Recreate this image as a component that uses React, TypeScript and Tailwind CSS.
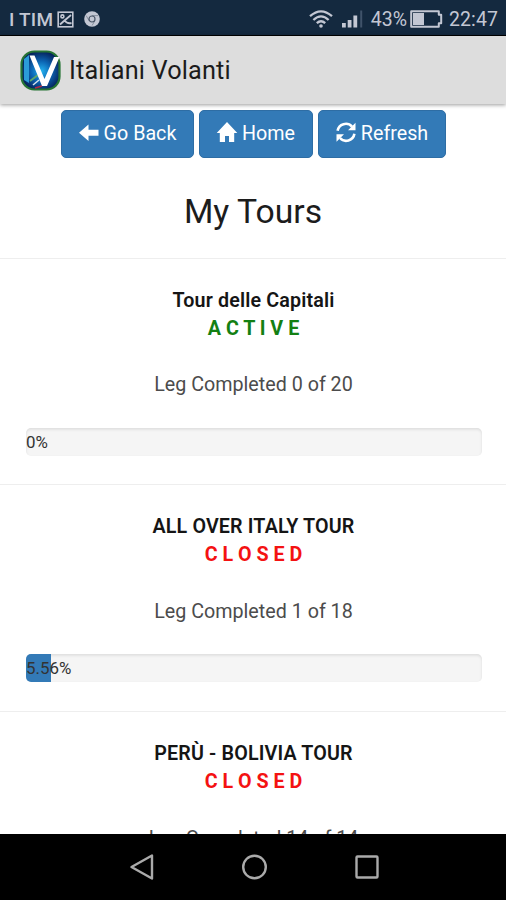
interface Tour {
  name: string
  status: 'ACTIVE' | 'CLOSED'
  completed: number
  legs: number
  progress: number
}

const TOURS: Tour[] = [
  { name: 'Tour delle Capitali', status: 'ACTIVE', completed: 0, legs: 20, progress: 0 },
  { name: 'ALL OVER ITALY TOUR', status: 'CLOSED', completed: 1, legs: 18, progress: 5.56 },
  { name: 'PERÙ - BOLIVIA TOUR', status: 'CLOSED', completed: 14, legs: 14, progress: 100 },
]

function StatusBar() {
  return (
    <div className="flex h-[35px] shrink-0 items-center bg-[#14293f] pt-[3px] pr-2 pl-[9px] text-[19.5px] leading-none text-[#c3c7d3]">
      <span className="text-[19px] font-medium tracking-[0.2px]">I TIM</span>
      <svg className="ml-1" width="17" height="17" viewBox="0 0 17 17" fill="none" stroke="currentColor" strokeWidth="1.6">
        <rect x="1.2" y="1.2" width="14.6" height="14.6" />
        <path d="M3 13.500L7.500 9.500L14 4M7.500 9.500Q10 13 14.500 12" strokeWidth="1.8" />
        <circle cx="5.4" cy="5.4" r="1.5" />
      </svg>
      <svg className="ml-[10px]" width="16" height="16" viewBox="0 0 16 16">
        <circle cx="8" cy="8" r="7.8" fill="currentColor" />
        <path d="M8 4.6h6M5.1 9.7L2.200 4.600M10.9 9.7L8.100 14.500" stroke="#7f8896" strokeWidth="0.9" />
        <circle cx="8" cy="8" r="3" fill="#c3c7d3" stroke="#4b5768" strokeWidth="1.2" />
      </svg>
      <svg className="ml-auto" width="24" height="18" viewBox="0 0 24 18" fill="none" stroke="currentColor" strokeWidth="2.3">
        <path d="M1 6.200Q12-3.500 23 6.200M4.400 10Q12 2.800 19.600 10M7.800 13.200Q12 9.200 16.200 13.200" />
        <circle cx="12" cy="16" r="1.8" fill="currentColor" stroke="none" />
      </svg>
      <svg className="ml-[9px]" width="21" height="18" viewBox="0 0 21 18" fill="currentColor">
        <rect x="0" y="13" width="3.8" height="4.5" />
        <rect x="5.7" y="10" width="3.8" height="7.5" />
        <rect x="11.4" y="5.5" width="3.8" height="12" />
        <rect x="18.2" y="0.5" width="2" height="17" fill="#40536a" />
      </svg>
      <span className="ml-2 pt-[2px]">43%</span>
      <svg className="ml-[3px]" width="33" height="18" viewBox="0 0 33 18">
        <path d="M1.2 1.2h27.6v3.6h2.4v8.4h-2.4v3.6H1.2z" fill="none" stroke="currentColor" strokeWidth="2" strokeLinejoin="round" />
        <rect x="3" y="3" width="11" height="12" fill="currentColor" />
      </svg>
      <span className="ml-[6px] pt-[2px] tracking-[0.1px]">22:47</span>
    </div>
  )
}

function AppLogo() {
  return (
    <svg width="41" height="41" viewBox="0 0 41 41">
      <defs>
        <radialGradient id="sky" cx="52%" cy="52%" r="52%">
          <stop offset="0" stopColor="#25b4f0" />
          <stop offset="0.5" stopColor="#0c66b4" />
          <stop offset="1" stopColor="#06245e" />
        </radialGradient>
      </defs>
      <rect x="1.500" y="1.500" width="38" height="38" rx="13" fill="url(#sky)" stroke="#267434" strokeWidth="2.200" />
      <path d="M4 9L9 5V33L4 30z" fill="#2b9bd8" />
      <path d="M10 31l8-6" stroke="#5da56a" strokeWidth="2" />
      <path d="M13 35l6-5" stroke="#d5e4ee" strokeWidth="1.500" />
      <path d="M15 38l7-2" stroke="#b02b46" strokeWidth="1.500" />
      <path d="M9.500 5.500h5L24.500 29L34 7H39.500L27 36h-5z" fill="#fff" />
    </svg>
  )
}

function ArrowLeftIcon() {
  return (
    <svg width="20" height="20" viewBox="0 0 20 20" fill="currentColor">
      <path d="M0 8.700L9.500 0.500V5.700H19.500V11.700H9.500V16.900z" />
    </svg>
  )
}

function HomeIcon() {
  return (
    <svg width="20" height="20" viewBox="0 0 20 20" fill="currentColor" overflow="visible">
      <path d="M10-2L20.300 9H17.200V18H12V12H8V18H2.800V9H-0.300z" />
    </svg>
  )
}

function RefreshIcon() {
  return (
    <svg width="20" height="20" viewBox="0 0 20 20" fill="currentColor" overflow="visible">
      <path d="M1.600 6.800A8.300 8.300 0 0 1 16 2.600M18.400 9.800A8.300 8.300 0 0 1 4 14" fill="none" stroke="currentColor" strokeWidth="2.600" />
      <path d="M19.500-1.200V6.300H12zM0.500 17.800V10.300H8z" />
    </svg>
  )
}

const ACTIONS = [
  { label: 'Go Back', icon: <ArrowLeftIcon />, width: 'w-[133px]' },
  { label: 'Home', icon: <HomeIcon />, width: 'w-[114px]' },
  { label: 'Refresh', icon: <RefreshIcon />, width: 'w-[128px]' },
]

function TourCard({ tour }: { tour: Tour }) {
  return (
    <section className="h-[226.7px] shrink-0 border-t-[1.4px] border-[#eeeeee] pt-[28px] text-center text-[19.7px] leading-[28.1px]">
      <h2 className="pl-px font-semibold tracking-[0.15px] text-[#151515]">{tour.name}</h2>
      <p className={tour.status === 'ACTIVE' ? 'pl-px font-bold text-[#138013]' : 'pl-px font-bold text-[#f41212]'}>
        {tour.status.split('').join(' ')}
      </p>
      <p className="mt-[28.4px] pl-px text-[#4c4c4c]">
        Leg Completed {tour.completed} of {tour.legs}
      </p>
      <div className="relative mr-[24px] ml-[26px] mt-[28.4px] h-[28px] overflow-hidden rounded-[5px] bg-[#f5f5f5] shadow-[inset_0_1.4px_3px_rgba(0,0,0,0.1)]">
        <div className="h-full bg-[#337ab7]" style={{ width: `${tour.progress}%` }} />
        <span className="absolute top-0 left-0 text-[16.9px] leading-[28px] text-[#333]">{tour.progress}%</span>
      </div>
    </section>
  )
}

export default function App() {
  return (
    <div className="flex h-[900px] w-[506px] flex-col overflow-hidden bg-white font-['Roboto',sans-serif]">
      <StatusBar />
      <header className="z-10 flex h-[69px] shrink-0 items-center border-t border-black bg-[#dddddd] pl-5 shadow-[0_1px_4px_rgba(0,0,0,0.4)]">
        <AppLogo />
        <h1 className="ml-2 pt-[2px] text-[25.3px] tracking-[0.13px] text-[#1b1b1b]">Italiani Volanti</h1>
      </header>

      <main className="flex min-h-0 flex-1 flex-col overflow-hidden">
        <nav className="mt-[6px] flex shrink-0 justify-center gap-[5px] pl-px">
          {ACTIONS.map((action) => (
            <button
              key={action.label}
              className={`flex h-[48px] items-center justify-center gap-[5px] rounded-[5px] border border-[#2e6da4] bg-[#337ab7] pb-px text-[19.7px] text-white ${action.width}`}
            >
              {action.icon}
              {action.label}
            </button>
          ))}
        </nav>
        <h2 className="mt-[34.7px] mb-[27px] shrink-0 text-center text-[33.7px] leading-[38px] text-[#1c1c1c]">My Tours</h2>
        {TOURS.map((tour) => (
          <TourCard key={tour.name} tour={tour} />
        ))}
      </main>

      <footer className="flex h-[66px] shrink-0 items-center justify-between bg-black pr-[126px] pl-[129px] text-[#aaa]">
        <svg width="26" height="28" viewBox="0 0 26 28" fill="none" stroke="currentColor" strokeWidth="2.4">
          <path d="M23 2.500V25.500L2.500 14z" strokeLinejoin="round" />
        </svg>
        <svg width="26" height="26" viewBox="0 0 26 26" fill="none" stroke="currentColor" strokeWidth="2.4">
          <circle cx="12.500" cy="13" r="11.300" />
        </svg>
        <svg width="26" height="26" viewBox="0 0 26 26" fill="none" stroke="currentColor" strokeWidth="2.4">
          <rect x="2.500" y="2.500" width="21" height="21" rx="1" />
        </svg>
      </footer>
    </div>
  )
}
